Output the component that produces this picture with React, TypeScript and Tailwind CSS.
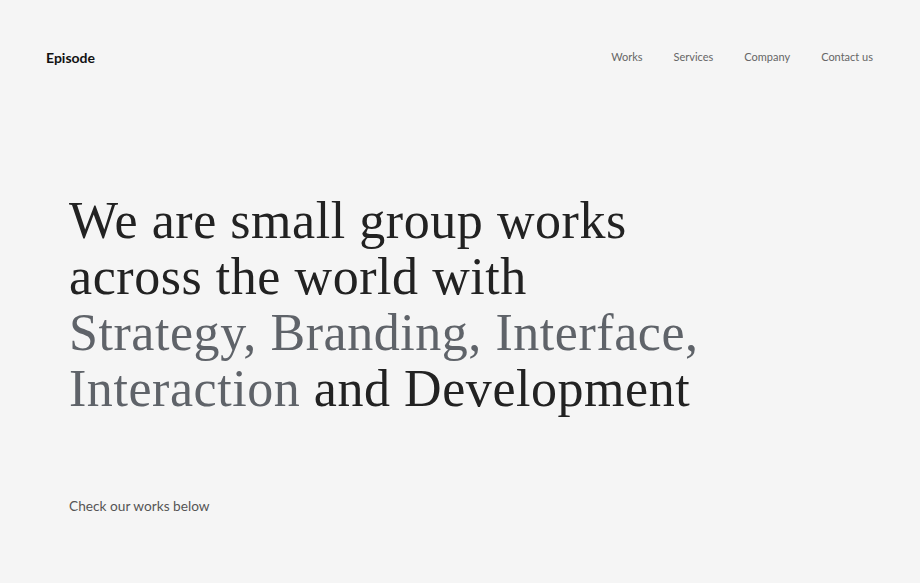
export default function App() {
  return (
    <div className="min-h-[583px] bg-[#f5f5f5] font-['Lato','Liberation_Sans',sans-serif]">
      {/* header */}
      <header className="flex items-center justify-between pl-[46px] pr-[47px] pt-[47px]">
        <div className="text-[14px] font-bold text-[#111]">Episode</div>
        <nav className="flex gap-[31px] text-[11px] text-[#666]">
          <a href="#">Works</a>
          <a href="#">Services</a>
          <a href="#">Company</a>
          <a href="#">Contact us</a>
        </nav>
      </header>

      {/* hero */}
      <main className="pl-[69px] pt-[125px]">
        <h1 className="font-['Liberation_Serif',serif] text-[52px] leading-[56px] tracking-[0.55px] text-[#222]">
          We are small group works
          <br />
          across the world with
          <br />
          <span className="text-[#5f6369]">Strategy, Branding, Interface,</span>
          <br />
          <span className="text-[#5f6369]">Interaction</span> and Development
        </h1>
        <p className="mt-[79px] text-[13.7px] text-[#555]">Check our works below</p>
      </main>
    </div>
  );
}
